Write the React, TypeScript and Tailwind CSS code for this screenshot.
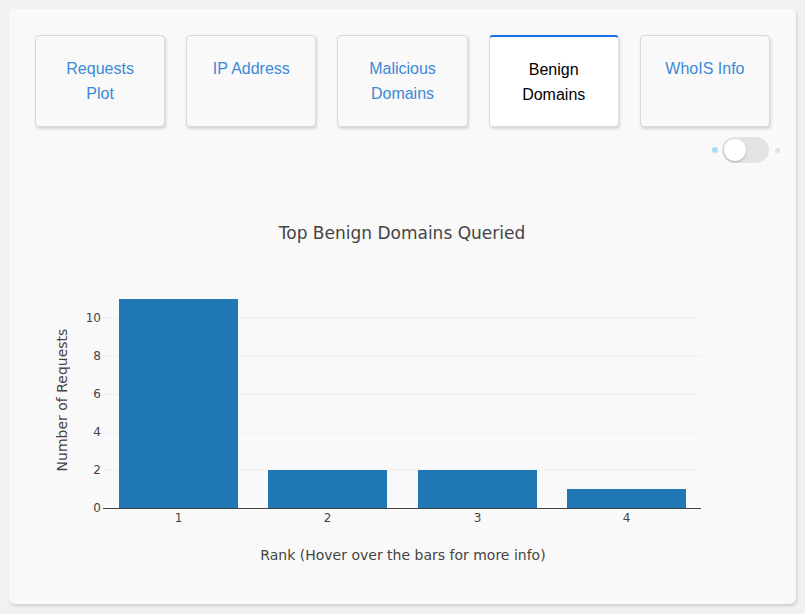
const tabs = [
  { label: ['Requests', 'Plot'], active: false },
  { label: ['IP Address'], active: false },
  { label: ['Malicious', 'Domains'], active: false },
  { label: ['Benign', 'Domains'], active: true },
  { label: ['WhoIS Info'], active: false },
];

const bars = [
  { rank: 1, x: 110, value: 11 },
  { rank: 2, x: 259, value: 2 },
  { rank: 3, x: 409, value: 2 },
  { rank: 4, x: 558, value: 1 },
];

const ZERO = 345;
const UNIT = 19;

const BarChart = () => {
  return (
    <svg width="787" height="441" className="block" style={{ fontFamily: '"DejaVu Sans", verdana, arial, sans-serif' }}>
      <text x="393" y="70" textAnchor="middle" dominantBaseline="central" fontSize="17" fill="#444">
        Top Benign Domains Queried
      </text>

      {/* grid */}
      {[2, 4, 6, 8, 10].map((v) => (
        <line key={v} x1="94" x2="692" y1={ZERO - v * UNIT} y2={ZERO - v * UNIT} stroke="#eee" strokeWidth="1" />
      ))}

      {bars.map((b) => (
        <rect key={b.rank} x={b.x} y={ZERO - b.value * UNIT} width="119" height={b.value * UNIT} fill="#1f77b4" />
      ))}

      <line x1="94" x2="692" y1={ZERO + 0.5} y2={ZERO + 0.5} stroke="#444" strokeWidth="1" />

      {[0, 2, 4, 6, 8, 10].map((v) => (
        <text key={v} x="92" y={ZERO - v * UNIT} textAnchor="end" dominantBaseline="central" fontSize="12" fill="#444">
          {v}
        </text>
      ))}

      {bars.map((b) => (
        <text key={b.rank} x={b.x + 59.5} y="355" textAnchor="middle" dominantBaseline="central" fontSize="12" fill="#444">
          {b.rank}
        </text>
      ))}

      <text x="394" y="392" textAnchor="middle" dominantBaseline="central" fontSize="14" fill="#444">
        Rank (Hover over the bars for more info)
      </text>
      <text
        x="53"
        y="237"
        textAnchor="middle"
        dominantBaseline="central"
        fontSize="14"
        fill="#444"
        transform="rotate(-90 53 237)"
      >
        Number of Requests
      </text>
    </svg>
  );
};

export default function App() {
  return (
    <div className="min-h-[614px] bg-[#f1f1f1] p-[9px]" style={{ fontFamily: '"Liberation Sans", Arial, sans-serif' }}>
      <div className="w-[787px] h-[595px] bg-[#f9f9f9] rounded-md shadow-[1px_2px_3px_rgba(0,0,0,0.15)]">
        <div className="flex gap-[21px] px-[26px] pt-[26px]">
          {tabs.map((t) => (
            <div
              key={t.label.join(' ')}
              className={
                t.active
                  ? 'flex-1 h-[92px] bg-white rounded border border-[#ddd] border-t-2 border-t-[#1a73e8] shadow-[1px_2px_3px_rgba(0,0,0,0.15)] pt-[20px] text-center text-[16px] leading-[25px] text-black'
                  : 'flex-1 h-[92px] bg-[#f9f9f9] rounded border border-[#d9d9d9] shadow-[1px_2px_3px_rgba(0,0,0,0.15)] pt-[20px] text-center text-[16px] leading-[25px] text-[#3b8ad8]'
              }
            >
              {t.label.map((l) => (
                <div key={l}>{l}</div>
              ))}
            </div>
          ))}
        </div>

        <div className="flex justify-end items-center gap-[4px] pr-[16px] mt-[10px]">
          <span className="w-[6px] h-[6px] rounded-full bg-[#a8dcf7]" />
          <div className="w-[47px] h-[26px] rounded-full bg-[#e3e3e3] flex items-center pl-[2px]">
            <span className="w-[22px] h-[22px] rounded-full bg-white shadow-[0_1px_2px_rgba(0,0,0,0.25)]" />
          </div>
          <span className="w-[5px] h-[5px] rounded-full bg-[#e3e3e3] ml-[2px]" />
        </div>

        <BarChart />
      </div>
    </div>
  );
}
